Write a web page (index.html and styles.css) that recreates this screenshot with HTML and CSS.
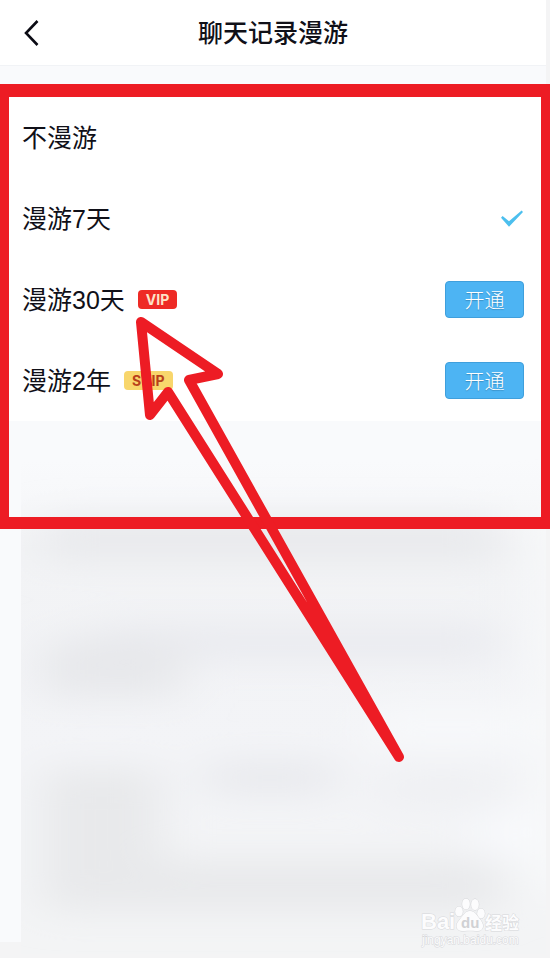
FILE: index.html
```html
<!DOCTYPE html>
<html lang="zh-CN">
<head>
<meta charset="utf-8">
<meta name="viewport" content="width=device-width, initial-scale=1">
<title>聊天记录漫游</title>
<link rel="stylesheet" href="styles.css">
</head>
<body>
<div class="page">
  <header class="header">
    <button class="back" type="button" aria-label="返回">
      <svg width="16" height="28" viewBox="0 0 16 28"><path d="M14.500 2L3 14L14.500 26" fill="none" stroke="#0b0b14" stroke-width="2.600"/></svg>
    </button>
    <h1 class="title">聊天记录漫游</h1>
  </header>

  <main class="content">
    <form class="options">
      <div class="row">
        <label class="name" for="r0">不漫游</label>
        <input class="choice" type="radio" name="roam" id="r0">
      </div>
      <div class="row">
        <label class="name" for="r7">漫游7天</label>
        <span class="pick">
          <input class="choice" type="radio" name="roam" id="r7" checked>
          <svg class="tick" width="24" height="18" viewBox="0 0 24 18"><path d="M1 7.800L2.600 6L9 11.300L21.600 0.400L23 2L9 16.800Z" fill="#4cbfee"/></svg>
        </span>
      </div>
      <div class="row">
        <span class="name">漫游30天</span>
        <span class="badge vip">VIP</span>
        <button class="open" type="button">开通</button>
      </div>
      <div class="row">
        <span class="name">漫游2年</span>
        <span class="badge svip">SVIP</span>
        <button class="open" type="button">开通</button>
      </div>
      <div class="frame"></div>
    </form>

    <div class="haze">
      <svg width="100%" height="100%" viewBox="0 0 529 499" preserveAspectRatio="none">
        <defs>
          <filter id="soft" x="-30%" y="-60%" width="160%" height="220%"><feGaussianBlur stdDeviation="24 17"/></filter>
          <linearGradient id="base" x1="0" y1="0" x2="0" y2="1">
            <stop offset="0" stop-color="#f9fafc"/>
            <stop offset="0.080" stop-color="#f7f8fa"/>
            <stop offset="0.180" stop-color="#f2f3f5"/>
            <stop offset="0.600" stop-color="#f3f4f7"/>
            <stop offset="1" stop-color="#f3f4f5"/>
          </linearGradient>
        </defs>
        <rect width="529" height="499" fill="url(#base)"/>
        <g filter="url(#soft)">
          <rect x="22" y="60" width="460" height="42" fill="#e8e9ec"/>
          <rect x="70" y="168" width="410" height="34" fill="#e9eaef"/>
          <rect x="22" y="182" width="140" height="58" fill="#e7e8eb"/>
          <rect x="22" y="312" width="118" height="110" fill="#e8e9eb"/>
          <rect x="186" y="306" width="130" height="30" fill="#e7e8ec"/>
          <rect x="360" y="318" width="130" height="30" fill="#eeeff2"/>
          <rect x="22" y="405" width="460" height="50" fill="#e8e9eb"/>
          <rect x="350" y="252" width="160" height="36" fill="#f8f9fb"/>
          <rect x="460" y="352" width="60" height="50" fill="#f8f9fc"/>
          <rect x="515" y="40" width="40" height="400" fill="#f8f9fa"/>
        </g>
      </svg>
    </div>
  </main>

  <svg class="arrow" width="290" height="460" viewBox="0 0 290 460"><path d="M11 12L88 64L59 70L269 447L38 82L20 105Z" fill="none" stroke="#ed1c24" stroke-width="10" stroke-linejoin="round"/></svg>

  <svg class="mark" width="108" height="52" viewBox="0 0 108 52">
    <g class="ink">
      <text class="brand" x="5" y="33">Bai</text>
      <text class="brand-cn" x="69" y="33">经验</text>
      <ellipse cx="43" cy="15.500" rx="3.800" ry="5"/>
      <ellipse cx="50" cy="8" rx="3.800" ry="5.600"/>
      <ellipse cx="59" cy="8.500" rx="3.800" ry="5.600"/>
      <ellipse cx="65" cy="17.500" rx="3.800" ry="5"/>
      <path d="M54 15C49 15 47 20 43 24.500C38 30 41 36 48 35C52 34.500 56 34.500 60 35C67 36 69 30 65 24.500C61 20 59 15 54 15Z"/>
      <text class="site" x="6" y="48">jingyan.baidu.com</text>
    </g>
    <text class="du" x="45" y="32">du</text>
  </svg>
</div>
</body>
</html>
```

FILE: styles.css
```css
* {
  box-sizing: border-box;
}

body {
  margin: 0;
  background: #f4f4f5;
  color: #101018;
  font-family: "Liberation Sans", "Noto Sans CJK SC", sans-serif;
}

.page {
  position: relative;
  display: flex;
  flex-direction: column;
  min-height: 100vh;
  overflow: hidden;
}

.header {
  display: grid;
  grid-template-columns: 64px 1fr 64px;
  align-items: center;
  height: 66px;
  margin-right: 4px;
  background: #fff;
  border-bottom: 1px solid #f1f3f6;
}

.back {
  display: flex;
  width: 64px;
  padding: 1px 0 0 23px;
  border: 0;
  background: none;
}

.title {
  margin: 0;
  text-align: center;
  font-size: 25px;
  font-weight: 500;
  line-height: 36px;
}

.content {
  display: flex;
  flex: 1;
  flex-direction: column;
  margin: 0 4px 16px 0;
  padding-top: 31px;
  background: #f9fafc;
}

.options {
  position: relative;
  margin: 0;
  background: #fff;
}

.row {
  display: flex;
  align-items: center;
  height: 81px;
  padding: 0 22px;
}

.name {
  font-size: 25px;
  line-height: 36px;
}

.pick {
  display: grid;
  margin-left: auto;
}

.choice {
  appearance: none;
  width: 24px;
  height: 18px;
  margin: 0 0 0 auto;
}

.pick .choice,
.tick {
  grid-area: 1 / 1;
}

.tick {
  pointer-events: none;
}

.badge {
  margin-left: 13px;
  padding: 0 8px;
  border-radius: 4px;
  font-family: Inter, sans-serif;
  font-size: 14px;
  font-weight: 700;
  line-height: 19px;
}

.vip {
  background: #ee2a25;
  color: #fde3c8;
}

.svip {
  background: #f8d66c;
  color: #b8401a;
}

.open {
  width: 79px;
  height: 37px;
  margin-left: auto;
  padding: 0;
  border: 1px solid #3f9fdc;
  border-radius: 4px;
  background: #4db4f3;
  color: #fff;
  font-family: "Noto Sans CJK SC", sans-serif;
  font-size: 20px;
  font-weight: 300;
  line-height: 32px;
  text-shadow: 0 1px 1px #3a8fc4;
}

.frame {
  position: absolute;
  top: -13px;
  right: -4px;
  bottom: -108px;
  left: 0;
  border: solid #ed1c24;
  border-width: 13px 9px 12px;
  pointer-events: none;
}

.haze {
  flex: 1;
  min-height: 484px;
  margin: 38px 0 -16px 21px;
}

.haze svg {
  display: block;
}

.arrow {
  position: absolute;
  top: 310px;
  left: 130px;
  pointer-events: none;
}

.mark {
  position: absolute;
  right: 26px;
  bottom: 10px;
}

.ink {
  fill: #fcfcfd;
  stroke: #d6d7da;
  stroke-width: 1px;
  paint-order: stroke;
}

.brand {
  font-size: 22px;
  font-weight: 700;
}

.brand-cn {
  font-family: "Noto Sans CJK SC", sans-serif;
  font-size: 17px;
  font-weight: 700;
}

.site {
  font-size: 12px;
}

.du {
  fill: #d0d1d4;
  font-size: 15px;
  font-weight: 700;
}
```
